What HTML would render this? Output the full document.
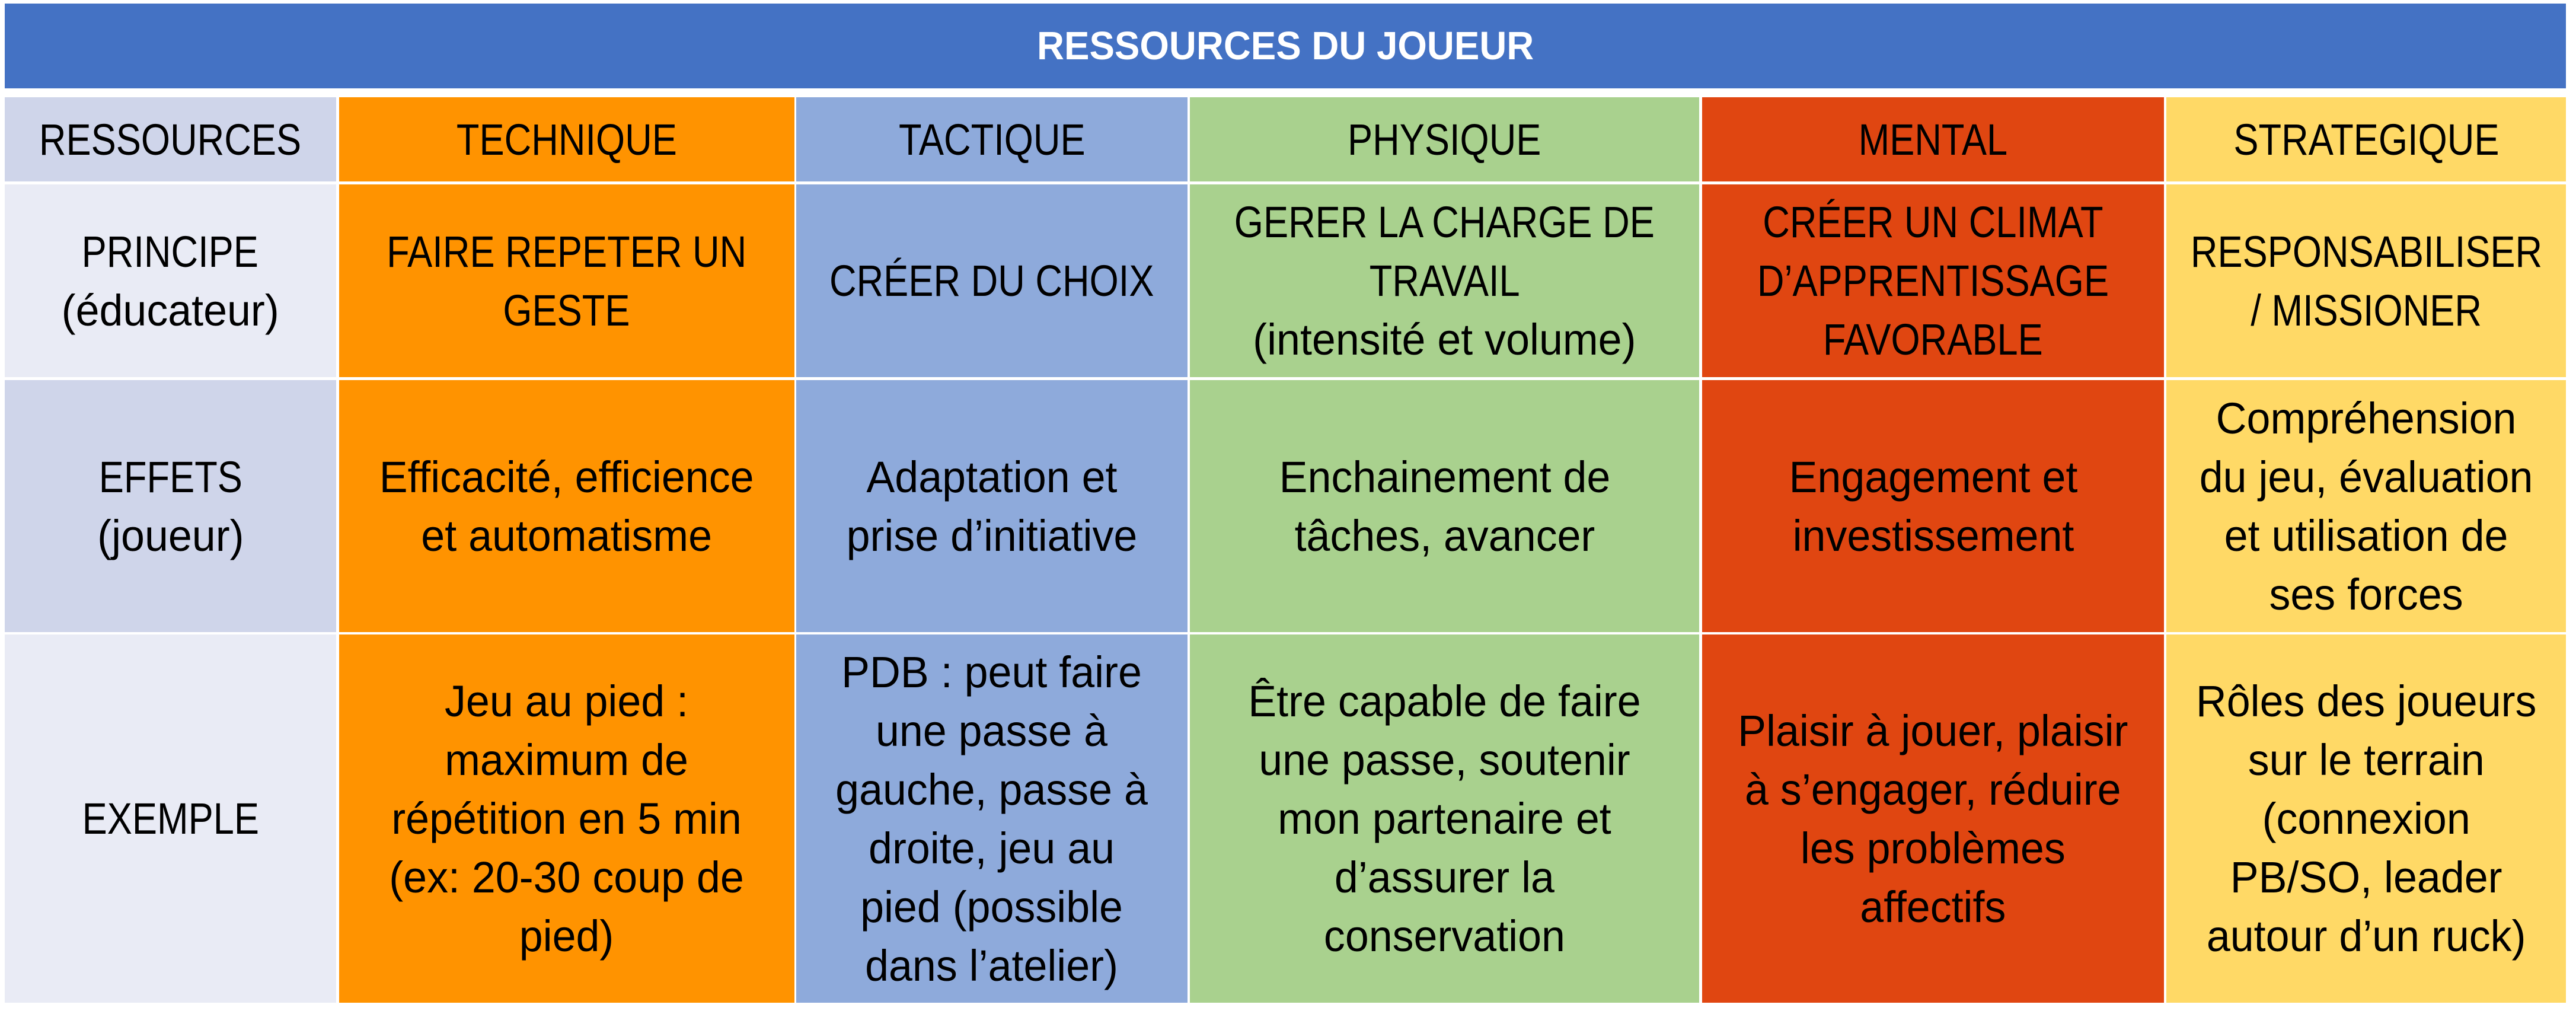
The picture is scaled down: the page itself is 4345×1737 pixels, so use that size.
<!DOCTYPE html>
<html><head><meta charset="utf-8"><style>
html,body{margin:0;padding:0;background:#fff;}
body{width:4345px;height:1737px;position:relative;overflow:hidden;font-family:"Liberation Sans",Arial,sans-serif;}
.c{position:absolute;display:flex;align-items:center;justify-content:center;text-align:center;color:#000;}
.t{display:inline-block;white-space:nowrap;font-size:74px;line-height:99px;transform:scaleX(0.97);}
.u{display:inline-block;transform:scaleX(0.88);}
.h{background:#4472C4;color:#fff;}
.h .t{font-weight:bold;font-size:67px;transform:scaleX(0.95);}
.a{background:#CFD5EA}.b{background:#E9EBF5}
.o{background:#FF9300}.bl{background:#8EAADB}.g{background:#A9D18E}.r{background:#E04611}.y{background:#FFD966}
</style></head><body>
<div class="c h" style="left:8px;top:6px;width:4320px;height:143px"><span class="t">RESSOURCES DU JOUEUR</span></div>

<div class="c a" style="left:8px;top:164px;width:559px;height:142px"><span class="t"><span class="u">RESSOURCES</span></span></div>
<div class="c o" style="left:572px;top:164px;width:768px;height:142px"><span class="t"><span class="u">TECHNIQUE</span></span></div>
<div class="c bl" style="left:1343px;top:164px;width:660px;height:142px"><span class="t"><span class="u">TACTIQUE</span></span></div>
<div class="c g" style="left:2007px;top:164px;width:859px;height:142px"><span class="t"><span class="u">PHYSIQUE</span></span></div>
<div class="c r" style="left:2871px;top:164px;width:779px;height:142px"><span class="t"><span class="u">MENTAL</span></span></div>
<div class="c y" style="left:3654px;top:164px;width:674px;height:142px"><span class="t"><span class="u">STRATEGIQUE</span></span></div>

<div class="c b" style="left:8px;top:311px;width:559px;height:325px"><span class="t"><span class="u">PRINCIPE</span><br>(éducateur)</span></div>
<div class="c o" style="left:572px;top:311px;width:768px;height:325px"><span class="t"><span class="u">FAIRE REPETER UN</span><br><span class="u">GESTE</span></span></div>
<div class="c bl" style="left:1343px;top:311px;width:660px;height:325px"><span class="t"><span class="u">CRÉER DU CHOIX</span></span></div>
<div class="c g" style="left:2007px;top:311px;width:859px;height:325px"><span class="t"><span class="u">GERER LA CHARGE DE</span><br><span class="u">TRAVAIL</span><br>(intensité et volume)</span></div>
<div class="c r" style="left:2871px;top:311px;width:779px;height:325px"><span class="t"><span class="u">CRÉER UN CLIMAT</span><br><span class="u">D’APPRENTISSAGE</span><br><span class="u">FAVORABLE</span></span></div>
<div class="c y" style="left:3654px;top:311px;width:674px;height:325px"><span class="t"><span class="u">RESPONSABILISER</span><br><span class="u">/ MISSIONER</span></span></div>

<div class="c a" style="left:8px;top:641px;width:559px;height:425px"><span class="t"><span class="u">EFFETS</span><br>(joueur)</span></div>
<div class="c o" style="left:572px;top:641px;width:768px;height:425px"><span class="t">Efficacité, efficience<br>et automatisme</span></div>
<div class="c bl" style="left:1343px;top:641px;width:660px;height:425px"><span class="t">Adaptation et<br>prise d’initiative</span></div>
<div class="c g" style="left:2007px;top:641px;width:859px;height:425px"><span class="t">Enchainement de<br>tâches, avancer</span></div>
<div class="c r" style="left:2871px;top:641px;width:779px;height:425px"><span class="t">Engagement et<br>investissement</span></div>
<div class="c y" style="left:3654px;top:641px;width:674px;height:425px"><span class="t">Compréhension<br>du jeu, évaluation<br>et utilisation de<br>ses forces</span></div>

<div class="c b" style="left:8px;top:1070px;width:559px;height:621px"><span class="t"><span class="u">EXEMPLE</span></span></div>
<div class="c o" style="left:572px;top:1070px;width:768px;height:621px"><span class="t">Jeu au pied :<br>maximum de<br>répétition en 5 min<br>(ex: 20-30 coup de<br>pied)</span></div>
<div class="c bl" style="left:1343px;top:1070px;width:660px;height:621px"><span class="t">PDB : peut faire<br>une passe à<br>gauche, passe à<br>droite, jeu au<br>pied (possible<br>dans l’atelier)</span></div>
<div class="c g" style="left:2007px;top:1070px;width:859px;height:621px"><span class="t">Être capable de faire<br>une passe, soutenir<br>mon partenaire et<br>d’assurer la<br>conservation</span></div>
<div class="c r" style="left:2871px;top:1070px;width:779px;height:621px"><span class="t">Plaisir à jouer, plaisir<br>à s’engager, réduire<br>les problèmes<br>affectifs</span></div>
<div class="c y" style="left:3654px;top:1070px;width:674px;height:621px"><span class="t">Rôles des joueurs<br>sur le terrain<br>(connexion<br>PB/SO, leader<br>autour d’un ruck)</span></div>
</body></html>
